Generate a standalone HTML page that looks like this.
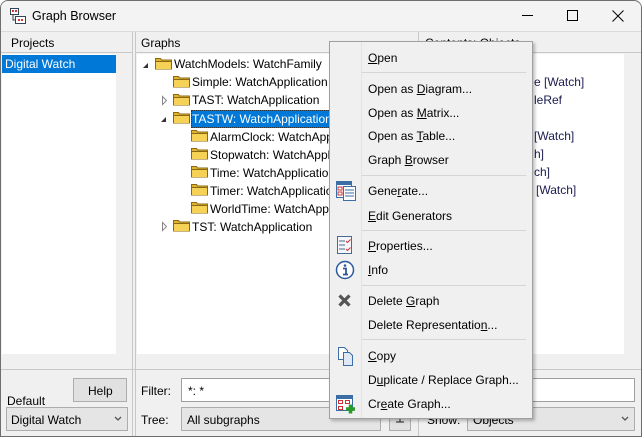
<!DOCTYPE html>
<html><head><meta charset="utf-8"><style>
*{box-sizing:border-box;margin:0;padding:0}
body{width:642px;height:437px;overflow:hidden;background:#fff;font-family:"Liberation Sans","DejaVu Sans",sans-serif;font-size:12px;color:#000;position:relative}
.a{position:absolute}
.win{left:0;top:0;width:642px;height:437px;border:1px solid #6e6e6e;border-radius:8px 8px 0 0;background:#f0f0f0;overflow:hidden}
.t{position:absolute;white-space:nowrap;line-height:16px}
.u{text-decoration:underline}
.sep{position:absolute;left:32px;right:6px;height:1px;background:#d5d5d5}
.mi{position:absolute;left:38px;white-space:nowrap;line-height:16px}
.btn{position:absolute;background:#e1e1e1;border:1px solid #adadad}
.inp{position:absolute;background:#fff;border:1px solid #a0a0a0}
.cb{position:absolute;background:#e5e5e5;border:1px solid #adadad}
</style></head><body>
<div class="a win">
 <div class="a" style="left:0;top:0;width:640px;height:30px;background:#f3f3f3"></div>
 <svg class="a" style="left:9px;top:7px" width="16" height="16" viewBox="0 0 16 16"><rect x="0.5" y="0.5" width="8" height="6" fill="#fff" stroke="#345"/><rect x="5.5" y="8.5" width="10" height="7" fill="#fff" stroke="#345"/><rect x="2" y="2" width="2" height="2" fill="#d33"/><rect x="5" y="2" width="2" height="2" fill="#d33"/><rect x="8" y="11" width="2" height="2" fill="#d33"/><rect x="11" y="11" width="2" height="2" fill="#d33"/><path d="M3 7v5h2" stroke="#345" fill="none"/></svg>
 <div class="t" style="left:31px;top:7px;font-size:12.5px">Graph Browser</div>
 <div class="a" style="left:521px;top:14px;width:11px;height:1px;background:#000"></div>
 <div class="a" style="left:566px;top:9px;width:11px;height:11px;border:1px solid #000"></div>
 <svg class="a" style="left:611px;top:9px" width="12" height="12"><path d="M0.5 0.5L11.5 11.5M11.5 0.5L0.5 11.5" stroke="#000"/></svg>
 <div class="a" style="left:0;top:30px;width:640px;height:1px;background:#dadada"></div>

 <div class="t" style="left:10px;top:34px">Projects</div>
 <div class="a" style="left:0;top:51px;width:131px;height:1px;background:#c8c8c8"></div>
 <div class="a" style="left:1px;top:53px;width:114px;height:300px;background:#fff"></div>
 <div class="a" style="left:1px;top:54px;width:114px;height:18px;background:#0078d7"></div>
 <div class="t" style="left:4px;top:55px;color:#fff">Digital Watch</div>
 <div class="a" style="left:131px;top:31px;width:1px;height:405px;background:#c8c8c8"></div>
 <div class="a" style="left:134px;top:31px;width:1px;height:405px;background:#c8c8c8"></div>

 <div class="t" style="left:140px;top:34px">Graphs</div>
 <div class="a" style="left:134px;top:51px;width:283px;height:1px;background:#c8c8c8"></div>
 <div class="a" style="left:136px;top:53px;width:280px;height:300px;background:#fff"></div>
 <div class="a" style="left:417px;top:31px;width:1px;height:405px;background:#c8c8c8"></div>
 <div class="a" style="left:418px;top:51px;width:222px;height:1px;background:#c8c8c8"></div>
 <div class="t" style="left:424px;top:34px">Contents: Objects</div>
 <div class="a" style="left:420px;top:53px;width:203px;height:300px;background:#fff"></div>
 <div class="a" style="left:0;top:368px;width:640px;height:1px;background:#c8c8c8"></div>

 <div class="t" style="left:533px;top:73px;color:#1a1a50">e [Watch]</div>
 <div class="t" style="left:533px;top:91px;color:#1a1a50">leRef</div>
 <div class="t" style="left:533px;top:127px;color:#1a1a50">[Watch]</div>
 <div class="t" style="left:533px;top:145px;color:#1a1a50">h]</div>
 <div class="t" style="left:533px;top:163px;color:#1a1a50">ch]</div>
 <div class="t" style="left:535px;top:181px;color:#1a1a50">[Watch]</div>

 <svg class="a" style="left:0;top:0" width="330" height="240">
  <defs><g id="f"><path d="M0.5 2.5h5l1 1.5h10v9h-16z" fill="#e0b430" stroke="#8a6a10"/><rect x="1" y="5.5" width="15" height="7.5" fill="#f5d255"/><path d="M1 5.5h15" stroke="#8a6a10"/></g></defs>
  <path d="M142 67l5-5v5z" fill="#333"/>
  <use href="#f" x="154" y="55"/>
  <use href="#f" x="172" y="73"/>
  <path d="M161.5 95.5l4 4-4 4z" fill="#fff" stroke="#888"/>
  <use href="#f" x="172" y="91"/>
  <path d="M160 121l5-5v5z" fill="#333"/>
  <use href="#f" x="172" y="109"/>
  <use href="#f" x="190" y="127"/><use href="#f" x="190" y="145"/><use href="#f" x="190" y="163"/><use href="#f" x="190" y="181"/><use href="#f" x="190" y="199"/>
  <path d="M161.5 221.5l4 4-4 4z" fill="#fff" stroke="#888"/>
  <use href="#f" x="172" y="217"/>
 </svg>
 <div class="t" style="left:173px;top:55px">WatchModels: WatchFamily</div>
 <div class="t" style="left:191px;top:73px">Simple: WatchApplication</div>
 <div class="t" style="left:191px;top:91px">TAST: WatchApplication</div>
 <div class="a" style="left:190px;top:109px;width:140px;height:18px;background:#0078d7;outline:1px dotted #333;outline-offset:-1px"></div>
 <div class="t" style="left:191px;top:110px;color:#fff">TASTW: WatchApplication</div>
 <div class="t" style="left:209px;top:128px">AlarmClock: WatchApplication</div>
 <div class="t" style="left:209px;top:146px">Stopwatch: WatchApplication</div>
 <div class="t" style="left:209px;top:164px">Time: WatchApplication</div>
 <div class="t" style="left:209px;top:182px">Timer: WatchApplication</div>
 <div class="t" style="left:209px;top:200px">WorldTime: WatchApplication</div>
 <div class="t" style="left:191px;top:218px">TST: WatchApplication</div>

 <div class="btn" style="left:72px;top:377px;width:54px;height:24px"></div>
 <div class="t" style="left:87px;top:382px">Help</div>
 <div class="t" style="left:6px;top:392px">Default</div>
 <div class="cb" style="left:5px;top:406px;width:122px;height:24px"></div>
 <div class="t" style="left:10px;top:411px">Digital Watch</div>
 <svg class="a" style="left:113px;top:415px" width="8" height="6"><path d="M1 1l3 3 3-3" stroke="#555" fill="none" stroke-width="1.3"/></svg>
 <div class="t" style="left:140px;top:382px">Filter:</div>
 <div class="inp" style="left:180px;top:377px;width:454px;height:24px"></div>
 <div class="t" style="left:187px;top:382px">*: *</div>
 <div class="t" style="left:140px;top:411px">Tree:</div>
 <div class="cb" style="left:180px;top:406px;width:200px;height:24px"></div>
 <div class="t" style="left:186px;top:411px">All subgraphs</div>
 <div class="btn" style="left:388px;top:406px;width:22px;height:24px"></div>
 <svg class="a" style="left:392px;top:410px" width="14" height="16"><path d="M2.5 2.5h9v5h-9zM7 0v11M3 11h8" stroke="#222" fill="none"/></svg>
 <div class="t" style="left:426px;top:411px">Show:</div>
 <div class="cb" style="left:466px;top:406px;width:168px;height:24px"></div>
 <div class="t" style="left:472px;top:411px">Objects</div>
 <svg class="a" style="left:620px;top:415px" width="8" height="6"><path d="M1 1l3 3 3-3" stroke="#555" fill="none" stroke-width="1.3"/></svg>
</div>

<div class="a" style="left:329px;top:41px;width:204px;height:378px;background:#f0f0f0;border:1px solid #a0a0a0;box-shadow:2px 2px 3px rgba(0,0,0,.25);font-size:12px">
 <div class="a" style="left:31px;top:0;width:1px;height:376px;background:#e2e2e2"></div>
 <div class="mi" style="top:8px"><span class="u">O</span>pen</div>
 <div class="sep" style="top:30px"></div>
 <div class="mi" style="top:39px">Open as <span class="u">D</span>iagram...</div>
 <div class="mi" style="top:63px">Open as <span class="u">M</span>atrix...</div>
 <div class="mi" style="top:86px">Open as <span class="u">T</span>able...</div>
 <div class="mi" style="top:110px">Graph <span class="u">B</span>rowser</div>
 <div class="sep" style="top:133px"></div>
 <div class="mi" style="top:141px">Gene<span class="u">r</span>ate...</div>
 <div class="mi" style="top:166px"><span class="u">E</span>dit Generators</div>
 <div class="sep" style="top:188px"></div>
 <div class="mi" style="top:196px"><span class="u">P</span>roperties...</div>
 <div class="mi" style="top:220px"><span class="u">I</span>nfo</div>
 <div class="sep" style="top:243px"></div>
 <div class="mi" style="top:251px">Delete <span class="u">G</span>raph</div>
 <div class="mi" style="top:275px">Delete Representatio<span class="u">n</span>...</div>
 <div class="sep" style="top:297px"></div>
 <div class="mi" style="top:306px"><span class="u">C</span>opy</div>
 <div class="mi" style="top:330px">D<span class="u">u</span>plicate / Replace Graph...</div>
 <div class="mi" style="top:354px">Cr<span class="u">e</span>ate Graph...</div>
 <svg class="a" style="left:0;top:0" width="32" height="376">
  <rect x="6.5" y="139.5" width="15" height="16" fill="#fff" stroke="#3a6ea5"/><rect x="7" y="140" width="14" height="3" fill="#3a6ea5"/>
  <rect x="8" y="145" width="4" height="3" fill="none" stroke="#c33"/><rect x="8" y="150" width="4" height="3" fill="none" stroke="#c33"/>
  <rect x="13.5" y="144.5" width="12" height="14" fill="#fff" stroke="#3a6ea5"/><path d="M15 148h9M15 151h9M15 154h9" stroke="#3a6ea5"/>
  <rect x="7.5" y="194.5" width="14" height="17" fill="#f4f6fa" stroke="#4a6a90"/><path d="M9 199h6M9 203h6M9 207h6" stroke="#4a6a90"/><path d="M16 199l1.5 1.5 3-3M16 207l1.5 1.5 3-3" stroke="#c33" fill="none"/>
  <circle cx="15" cy="228" r="8.5" fill="#fff" stroke="#2a5a9a" stroke-width="1.5"/><circle cx="15" cy="223.5" r="1.3" fill="#2a5a9a"/><path d="M13 226.5h3v6M13 232.5h5" stroke="#2a5a9a" stroke-width="1.8" fill="none"/>
  <path d="M9.5 253.5l10 10M19.5 253.5l-10 10" stroke="#555" stroke-width="3.2"/>
  <path d="M8.5 305.5h6l3 3v9h-9z" fill="#fff" stroke="#3a6ea5"/><path d="M13.5 310.5h6l3 3v10h-9z" fill="#dfe8f4" stroke="#3a6ea5"/>
  <rect x="6.5" y="353.5" width="16" height="15" fill="#fff" stroke="#3a6ea5"/><rect x="7" y="354" width="15" height="3" fill="#3a6ea5"/>
  <rect x="8.5" y="358.5" width="4" height="3" fill="none" stroke="#c33"/><rect x="15.5" y="358.5" width="4" height="3" fill="none" stroke="#c33"/><rect x="8.5" y="364.5" width="4" height="3" fill="none" stroke="#c33"/>
  <path d="M16 367h9M20.5 362.5v9" stroke="#2a9a2a" stroke-width="3.5"/>
 </svg>
</div>
</body></html>
